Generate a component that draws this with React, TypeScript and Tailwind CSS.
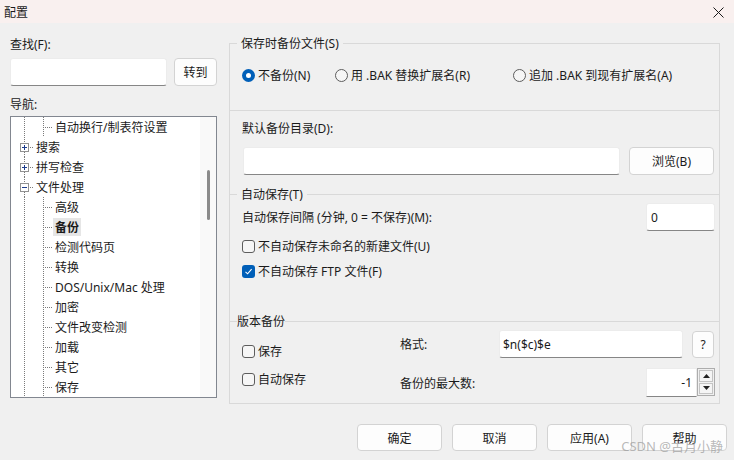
import type { ReactNode } from 'react';

const font = "font-['Noto_Sans','Noto_Sans_CJK_SC',sans-serif]";

type TreeRow = { label: string; level: 0 | 1; expander?: '+' | '-'; selected?: boolean };

const treeRows: TreeRow[] = [
  { label: '自动换行/制表符设置', level: 1 },
  { label: '搜索', level: 0, expander: '+' },
  { label: '拼写检查', level: 0, expander: '+' },
  { label: '文件处理', level: 0, expander: '-' },
  { label: '高级', level: 1 },
  { label: '备份', level: 1, selected: true },
  { label: '检测代码页', level: 1 },
  { label: '转换', level: 1 },
  { label: 'DOS/Unix/Mac 处理', level: 1 },
  { label: '加密', level: 1 },
  { label: '文件改变检测', level: 1 },
  { label: '加载', level: 1 },
  { label: '其它', level: 1 },
  { label: '保存', level: 1 },
];

function Connector({ row }: { row: TreeRow }) {
  const dot = { stroke: '#7a7a7a', strokeWidth: 1, strokeDasharray: '1 1' };
  if (row.level === 0) {
    return (
      <svg width="23" height="20" shapeRendering="crispEdges" className="shrink-0">
        <line x1="13.5" y1="0" x2="13.5" y2="5" {...dot} />
        <line x1="13.5" y1="15" x2="13.5" y2="20" {...dot} />
        <line x1="19" y1="10.5" x2="23" y2="10.5" {...dot} />
        <rect x="9.5" y="6.5" width="8" height="8" fill="#fff" stroke="#919191" />
        <line x1="11" y1="10.5" x2="16" y2="10.5" stroke="#1d3c8c" />
        {row.expander === '+' && <line x1="13.5" y1="8" x2="13.5" y2="13" stroke="#1d3c8c" />}
      </svg>
    );
  }
  return (
    <svg width="42" height="20" shapeRendering="crispEdges" className="shrink-0">
      <line x1="13.5" y1="0" x2="13.5" y2="20" {...dot} />
      <line x1="32.5" y1="0" x2="32.5" y2="20" {...dot} />
      <line x1="34" y1="10.5" x2="42" y2="10.5" {...dot} />
    </svg>
  );
}

function Tree() {
  return (
    <div className="mt-[3px] h-[282px] border border-[#828790] bg-white flex">
      <div className="flex-1 overflow-hidden">
        {treeRows.map((row) => (
          <div key={row.label} className="h-[20px] flex items-center">
            <Connector row={row} />
            <span
              className={
                'px-[2px] pt-[1px] leading-[17px] whitespace-nowrap ' +
                (row.selected ? 'bg-[#e6e6e6] font-bold' : '')
              }
            >
              {row.label}
            </span>
          </div>
        ))}
      </div>
      <div className="w-[16px] bg-[#f9f9f9] flex justify-center">
        <div className="mt-[53px] ml-[1px] w-[3px] h-[50px] rounded-full bg-[#8a8a8a]" />
      </div>
    </div>
  );
}

function TextBox({ className = '', children }: { className?: string; children?: ReactNode }) {
  return (
    <div
      className={
        'bg-white border border-[#ececec] border-b-[#868686] rounded-[3px] flex items-center ' + className
      }
    >
      {children}
    </div>
  );
}

function Button({ className = '', children }: { className?: string; children: ReactNode }) {
  return (
    <div
      className={
        'bg-[#fdfdfd] border border-[#d3d3d3] rounded-[4px] flex items-center justify-center pt-[1px] ' + className
      }
    >
      {children}
    </div>
  );
}

function Radio({ checked, children, className = '' }: { checked?: boolean; children: ReactNode; className?: string }) {
  return (
    <div className={'flex items-center ' + className}>
      {checked ? (
        <span className="w-[13px] h-[13px] rounded-full bg-[#005fb8] flex items-center justify-center shrink-0">
          <span className="w-[5px] h-[5px] rounded-full bg-white" />
        </span>
      ) : (
        <span className="w-[13px] h-[13px] rounded-full border border-[#5d5d5d] bg-[#f6f6f6] shrink-0" />
      )}
      <span className="ml-[3px] whitespace-nowrap">{children}</span>
    </div>
  );
}

function Checkbox({ checked, children, className = '' }: { checked?: boolean; children: ReactNode; className?: string }) {
  return (
    <div className={'flex items-center ' + className}>
      {checked ? (
        <span className="w-[13px] h-[13px] rounded-[3px] bg-[#005fb8] flex items-center justify-center shrink-0">
          <svg width="9" height="9" viewBox="0 0 9 9">
            <path d="M1.5 4.8 L3.6 6.8 L7.6 2.2" fill="none" stroke="#fff" strokeWidth="1.1" />
          </svg>
        </span>
      ) : (
        <span className="w-[13px] h-[13px] rounded-[3px] border border-[#5d5d5d] bg-[#f6f6f6] shrink-0" />
      )}
      <span className="ml-[3px] whitespace-nowrap">{children}</span>
    </div>
  );
}

function Spinner() {
  return (
    <div className="w-[18px] h-[28px] border border-[#adadad] bg-[#f0f0f0] flex flex-col p-[1px] gap-[1px]">
      <div className="flex-1 border border-[#c4c4c4] bg-[#f5f5f5] flex items-center justify-center">
        <svg width="7" height="4" viewBox="0 0 7 4">
          <path d="M0 4 L3.5 0 L7 4 Z" fill="#222" />
        </svg>
      </div>
      <div className="flex-1 border border-[#c4c4c4] bg-[#f5f5f5] flex items-center justify-center">
        <svg width="7" height="4" viewBox="0 0 7 4">
          <path d="M0 0 L7 0 L3.5 4 Z" fill="#222" />
        </svg>
      </div>
    </div>
  );
}

export default function App() {
  return (
    <div className={`${font} relative w-[734px] h-[460px] overflow-hidden bg-[#f0f0f0] text-[12px] leading-[17px] text-[#1b1b1b]`}>
      {/* title bar */}
      <div className="h-[23px] bg-[#f9f0ef] flex items-center justify-between pl-[4px] pr-[10px]">
        <span className="text-[12px] leading-[17px] mt-[1px]">配置</span>
        <svg width="11" height="11" viewBox="0 0 11 11" className="mt-[1px]">
          <path d="M0.5 0.5 L10.5 10.5 M10.5 0.5 L0.5 10.5" stroke="#1a1a1a" strokeWidth="1" />
        </svg>
      </div>

      <div className="flex pt-[12px] pl-[10px]">
        {/* left column */}
        <div className="w-[207px] shrink-0">
          <div className="pt-[1px] -mb-[1px]">查找(F):</div>
          <div className="mt-[6px] flex">
            <TextBox className="w-[157px] h-[28px]" />
            <Button className="ml-[7px] w-[43px] h-[28px]">转到</Button>
          </div>
          <div className="mt-[10px]">导航:</div>
          <Tree />
        </div>

        {/* right panel */}
        <fieldset className="ml-[12px] w-[491px] border border-[#d9d9d9]">
          <legend className="ml-[7px] px-[4px]">保存时备份文件(S)</legend>
          <div className="pt-[15px] pb-[26px] pl-[12px] flex">
            <Radio checked className="w-[93px]">不备份(N)</Radio>
            <Radio className="w-[178px]">用 .BAK 替换扩展名(R)</Radio>
            <Radio>追加 .BAK 到现有扩展名(A)</Radio>
          </div>

          <div className="border-t border-[#d9d9d9] pt-[9px] pb-[11px] pl-[12px] pr-[5px]">
            <div>默认备份目录(D):</div>
            <div className="mt-[10px] flex items-center pl-[1px]">
              <TextBox className="w-[377px] h-[28px]" />
              <Button className="ml-[9px] w-[85px] h-[28px]">浏览(B)</Button>
            </div>
          </div>

          <fieldset className="border-t border-[#d9d9d9]">
            <legend className="ml-[7px] px-[4px]">自动保存(T)</legend>
            <div className="h-[28px] flex items-center justify-between pl-[12px] pr-[4px]">
              <span className="pt-[1px]">自动保存间隔 (分钟, 0 = 不保存)(M):</span>
              <TextBox className="w-[69px] h-[28px] pl-[4px]">0</TextBox>
            </div>
            <div className="pl-[12px] mt-[3px] pb-[29px]">
              <Checkbox className="h-[25px]">不自动保存未命名的新建文件(U)</Checkbox>
              <Checkbox checked className="h-[25px]">不自动保存 FTP 文件(F)</Checkbox>
            </div>
          </fieldset>

          <fieldset className="border-t border-[#d9d9d9]">
            <legend className="ml-[7px]">版本备份</legend>
            <div className="flex pl-[12px] pr-[4px] pb-[6px]">
              <div className="w-[158px] pt-[11px]">
                <Checkbox className="h-[20px]">保存</Checkbox>
                <Checkbox className="h-[20px] mt-[8px]">自动保存</Checkbox>
              </div>
              <div className="flex-1">
                <div className="h-[28px] flex items-center">
                  <span className="w-[99px] pt-[1px]">格式:</span>
                  <TextBox className="w-[184px] h-[28px] pl-[3px]">$n($c)$e</TextBox>
                  <Button className="ml-[9px] w-[22px] h-[27px]">?</Button>
                </div>
                <div className="mt-[10px] h-[29px] flex items-center">
                  <span className="pt-[1px]">备份的最大数:</span>
                  <div className="ml-auto flex items-start">
                    <TextBox className="w-[51px] h-[29px] justify-end pr-[4px] rounded-none">-1</TextBox>
                    <Spinner />
                  </div>
                </div>
              </div>
            </div>
          </fieldset>
        </fieldset>
      </div>

      {/* dialog buttons */}
      <div className="mt-[20px] flex justify-end gap-[10px] pr-[7px]">
        <Button className="w-[85px] h-[27px] border-[#0067c0]">确定</Button>
        <Button className="w-[85px] h-[27px]">取消</Button>
        <Button className="w-[85px] h-[27px]">应用(A)</Button>
        <Button className="w-[85px] h-[27px]">帮助</Button>
      </div>

      <div className="absolute right-[11px] bottom-[5px] text-[13px] leading-[18px] text-[#9a9a9a]/70 whitespace-nowrap">
        CSDN @古月小静
      </div>
    </div>
  );
}
